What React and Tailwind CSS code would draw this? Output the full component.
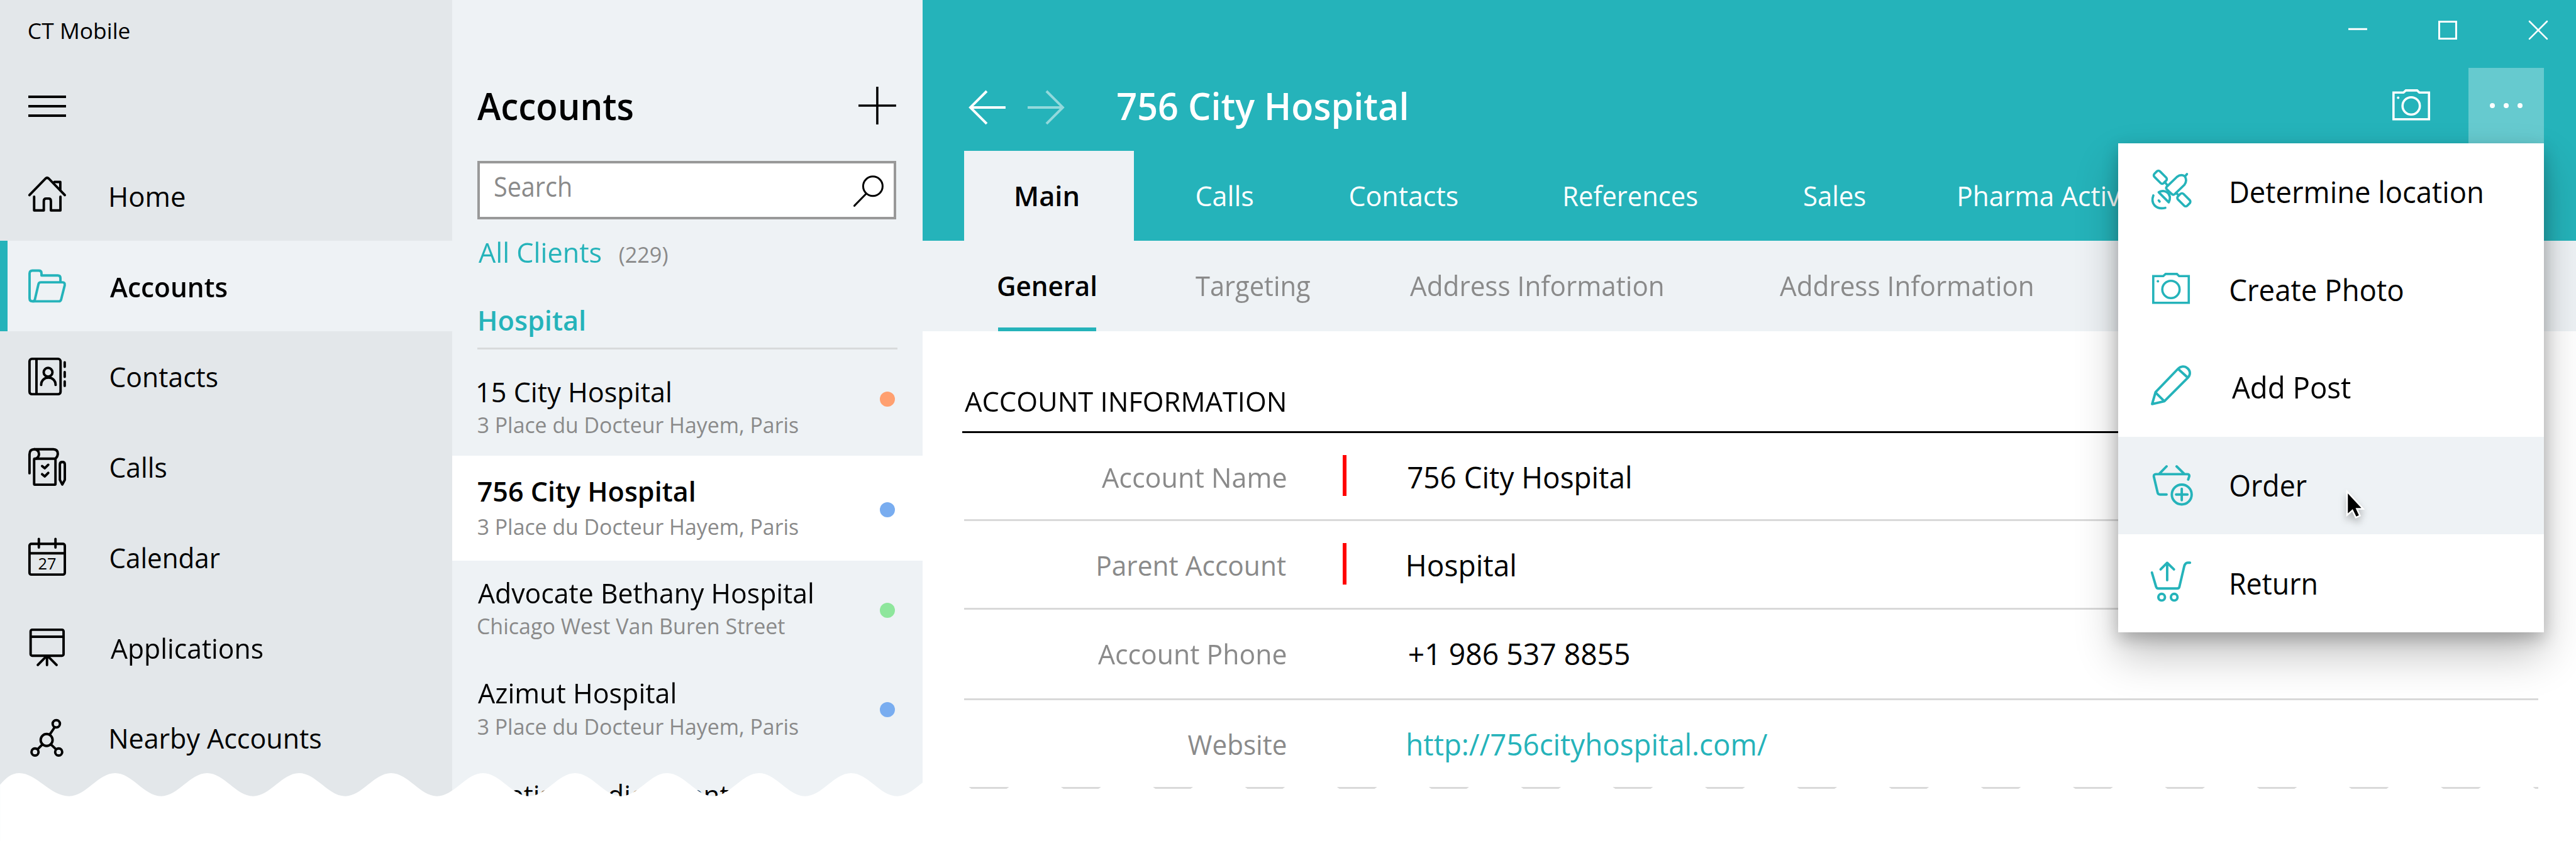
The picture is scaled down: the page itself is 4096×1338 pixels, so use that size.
import { useLayoutEffect, useRef } from "react";

// Single-line text whose ink starts at the box's left edge and spans `w` pixels.
function Label({ w, className = "", children }) {
  const ref = useRef(null);
  useLayoutEffect(() => {
    const el = ref.current;
    const cs = getComputedStyle(el);
    const ctx = document.createElement("canvas").getContext("2d");
    ctx.font = `${cs.fontWeight} 100px ${cs.fontFamily}`;
    const size = parseFloat(cs.fontSize) / 100;
    const m = ctx.measureText(el.textContent);
    const left = m.actualBoundingBoxLeft * size;
    const ink = left + m.actualBoundingBoxRight * size;
    el.style.transform = `scaleX(${w / ink}) translateX(${left}px)`;
  }, [w]);
  return (
    <div className={`shrink-0 leading-none whitespace-nowrap ${className}`} style={{ width: w }}>
      <span ref={ref} className="inline-block origin-left align-top leading-none">
        {children}
      </span>
    </div>
  );
}

function Icon({ w = 60, h = 60, sw = 3.9, className = "", children }) {
  return (
    <svg
      width={w}
      height={h}
      viewBox={`0 0 ${w} ${h}`}
      fill="none"
      stroke="currentColor"
      strokeWidth={sw}
      strokeLinecap="round"
      strokeLinejoin="round"
      className={`block shrink-0 overflow-visible ${className}`}
    >
      {children}
    </svg>
  );
}

const HomeIcon = () => (
  <Icon>
    <path d="M1.8 29.5 27.5 3Q30 .8 32.5 3L58.2 29.5" />
    <path d="M41.5 8.5H51V20.5" />
    <path d="M9.3 32V53.8H24.7V39Q24.7 35 28.5 35H32.500Q36 35 36 39V53.8H51.2V32" />
  </Icon>
);

const FolderIcon = () => (
  <Icon>
    <path d="M9 54.5H7Q2 54.5 2 49.5V10Q2 5.5 6.5 5.5H16.5Q21 5.5 21 9.5V13.3H47Q51.2 13.3 51.2 17.5V24" />
    <path d="M9 54.5H48.5Q51.5 54.5 52.3 51.5L58 29Q58.8 24.2 54.5 24.2H20Q17 24.2 16.2 27L10.5 51.5Q9.8 54.5 7 54.5" />
  </Icon>
);

const ContactsIcon = () => (
  <Icon>
    <rect x="1.9" y="1.9" width="49.5" height="56.4" rx="4" />
    <path d="M13 2V58M58 7.5V14.5M58 23V30.5M58 38V45" />
    <circle cx="31.5" cy="23.3" r="7" />
    <path d="M20.5 43.5C20.5 28 43.5 28 43.5 43.5" />
  </Icon>
);

const CallsIcon = () => (
  <Icon>
    <path d="M1.9 40V10Q2 1.8 9.5 1.8H40Q47 2 47 9Q47 13 43.5 16.5" />
    <path d="M9.5 1.8Q17 2.5 17 9.5Q17 14 12.5 16.5" />
    <rect x="9.3" y="16.8" width="34" height="41.4" rx="1" />
    <path d="M22 28.5 26.3 32 31.8 26.5M22 41.5 26.3 45 31.8 39.5" />
    <path d="M50.3 50.5V26Q50.3 22 54.2 22Q58.2 22 58.2 26V50.5L54.2 58Z" />
  </Icon>
);

const CalendarIcon = () => (
  <Icon>
    <rect x="1.9" y="9.3" width="56.3" height="49" rx="3" />
    <path d="M2 24.3H58M16.8 1.5V15M43.3 1.5V15" />
    <text x="30" y="50.6" textAnchor="middle" fontSize="25.5" fontWeight="500" fill="currentColor" stroke="none">
      27
    </text>
  </Icon>
);

const ApplicationsIcon = () => (
  <Icon>
    <rect x="3.7" y="1.9" width="52.5" height="41.4" rx="2.5" />
    <path d="M4 13H56M29.8 44V58.2M28.5 44.5 15.2 58M31.5 44.5 45 58" />
  </Icon>
);

const NearbyIcon = () => (
  <Icon>
    <circle cx="29.2" cy="33.3" r="9.5" />
    <circle cx="44.6" cy="7.6" r="5.8" />
    <circle cx="10.7" cy="52.5" r="5.6" />
    <circle cx="48.4" cy="52.5" r="5.6" />
    <path d="M42 13 34 25M22.500 40.5 15 48M36 40.5 44 48" />
  </Icon>
);

const CameraIcon = ({ className }) => (
  <Icon h={50} sw={3.6} className={className}>
    <path d="M1.8 5.300H17.700L21.5 1.9H39.5L43 5.3H58.4V47.8H1.8Z" strokeLinejoin="miter" />
    <circle cx="30" cy="26.5" r="13.8" />
    <circle cx="9.2" cy="13.5" r="2" fill="currentColor" stroke="none" />
  </Icon>
);

const SatelliteIcon = () => (
  <Icon w={64} h={64} sw={3.7}>
    <rect x="4.5" y="5.7" width="21" height="12.5" rx="3.5" transform="rotate(45 15 12)" />
    <rect x="42" y="41.7" width="21" height="12.5" rx="3.5" transform="rotate(45 52.5 48)" />
    <path d="M25 27.5 41.5 11.5Q48 6.5 54 10.5Q58.5 17 53.5 24L38 39Q35.5 41 33 38.5L25.5 31.5Q23.5 29.5 25 27.5Z" />
    <path d="M54.5 10.5 57.5 7M22 19.5 26 24.5M40 37 44 40.5" />
    <path d="M12.5 36 28.5 52Q33 42.5 26.5 36.5Q20 31.5 12.5 36Z" />
    <path d="M12.5 49 14 50.8M4 41C-1 54 8 64 23 60.800" />
  </Icon>
);

const PencilIcon = () => (
  <Icon w={64} h={64}>
    <path d="M43 6 7.5 43 2 62 21.5 57.5 59 20C63 15.5 63.5 9.5 58.5 5C54 .8 47.5 1.2 43 6ZM43.5 6 59 20M7.8 44 21 57" />
  </Icon>
);

const BasketIcon = () => (
  <Icon w={64} h={64}>
    <path d="M22 2 10.6 13.7M38 2 50 13.7M56.5 23 58.3 17.5Q58.3 14.4 55 14.4H5Q1.2 14.4 1.8 18.5L7.8 44Q8.5 46.8 11.5 46.8H22" />
    <circle cx="46.2" cy="46.8" r="15.8" />
    <path d="M37.2 46.8H55.300M46.2 37.800V55.8" />
  </Icon>
);

const ReturnIcon = () => (
  <Icon w={64} h={64}>
    <path d="M1.7 18 8.3 40.5Q9.3 43.4 12 43.4H42Q44.7 43.4 45.5 40.5L53 8.5Q54.5 2.3 59 2.3H62.3" />
    <path d="M26 2.5V30M15.5 13 26 2.5 36.8 13" />
    <circle cx="17.2" cy="57.2" r="5.3" />
    <circle cx="37.2" cy="57.2" r="5.3" />
  </Icon>
);

const NAV = [
  { label: "Home", icon: HomeIcon, w: 117.5 },
  { label: "Accounts", icon: FolderIcon, w: 186, active: true },
  { label: "Contacts", icon: ContactsIcon, w: 170 },
  { label: "Calls", icon: CallsIcon, w: 88.5 },
  { label: "Calendar", icon: CalendarIcon, w: 174 },
  { label: "Applications", icon: ApplicationsIcon, w: 242 },
  { label: "Nearby Accounts", icon: NearbyIcon, w: 335 },
];

function Sidebar() {
  return (
    <aside className="flex w-[720px] shrink-0 flex-col bg-[#e3e7ea]">
      <div className="h-[152.5px] shrink-0 pt-8 pl-[46px]">
        <Label w={160} className="text-[35px]">CT Mobile</Label>
      </div>
      <div className="ml-[45px] flex h-[87.5px] w-[60px] shrink-0 flex-col gap-[11px]">
        <div className="h-1 bg-black" />
        <div className="h-1 bg-black" />
        <div className="h-1 bg-black" />
      </div>
      {NAV.map(({ label, icon: Glyph, w, active }) => (
        <div
          key={label}
          className={`flex h-36 shrink-0 items-center border-l-[12.5px] pl-[33px] ${
            active ? "border-[#25b3ba] bg-[#eef2f5] font-semibold" : "border-transparent"
          }`}
        >
          <span className={active ? "text-[#25b3ba]" : ""}>
            <Glyph />
          </span>
          <Label w={w} className={`pt-[3px] text-[44px] ${active ? "ml-[70px]" : "ml-[71px]"}`}>{label}</Label>
        </div>
      ))}
    </aside>
  );
}

const ACCOUNTS = [
  { name: "15 City Hospital", nw: 306, sub: "3 Place du Docteur Hayem, Paris", sw: 510, row: "h-[169px] pt-[46px]", gap: "mt-[13.5px]", dot: "mt-[21.5px] bg-[#ffa070]" },
  { name: "756 City Hospital", nw: 344, sub: "3 Place du Docteur Hayem, Paris", sw: 510, row: "h-[168px] pt-[36px] bg-white font-semibold", gap: "mt-[17px]", dot: "mt-[38.5px] bg-[#79adf0]" },
  { name: "Advocate Bethany Hospital", nw: 532.5, sub: "Chicago West Van Buren Street", sw: 489, row: "h-[160px] pt-[30px]", gap: "mt-[13px]", dot: "mt-[37px] bg-[#8ee69c]" },
  { name: "Azimut Hospital", nw: 313.5, sub: "3 Place du Docteur Hayem, Paris", sw: 510, row: "h-[160px] pt-[29.5px]", gap: "mt-[14px]", dot: "mt-[35.5px] bg-[#79adf0]" },
  { name: "Baptist Medical Center", nw: 441, row: "h-[127px] pt-[31px]" },
];

function AccountList() {
  return (
    <section className="flex w-[750px] shrink-0 flex-col bg-[#eef2f5]">
      <div className="flex h-[256px] shrink-0 items-start justify-between pr-[42px] pl-10">
        <Label w={247.5} className="mt-[139.5px] text-[59px] font-semibold">Accounts</Label>
        <Icon sw={3.6} className="mt-[138px]">
          <path d="M30 0V60M0 30H60" strokeLinecap="butt" />
        </Icon>
      </div>
      <div className="mx-10 flex h-[94px] w-[668px] shrink-0 justify-between border-[4.5px] border-[#999] bg-white pr-[16px] pl-[25px]">
        <Label w={120.5} className="mt-[17px] text-[43px] text-[#8a8a8a]">Search</Label>
        <Icon w={50} h={50} sw={3} className="mt-[20px]">
          <circle cx="33" cy="17.3" r="15.5" />
          <path d="M22.5 29 3.5 48.5" />
        </Icon>
      </div>
      <div className="flex h-[139px] shrink-0 pt-[31px] pl-[42px]">
        <Label w={195} className="text-[44px] text-[#25b3ba]">All Clients</Label>
        <Label w={76.5} className="mt-[8px] ml-[30px] text-[35px] text-[#8a8a8a]">(229)</Label>
      </div>
      <div className="mr-10 ml-10 flex h-[68px] w-[670px] shrink-0 border-b-[3.5px] border-[#d8dadb] pl-1">
        <Label w={166} className="text-[44px] font-semibold text-[#25b3ba]">Hospital</Label>
      </div>
      {ACCOUNTS.map((a) => (
        <div key={a.name} className={`flex shrink-0 justify-between pr-11 pl-[41px] ${a.row}`}>
          <div>
            <Label w={a.nw} className="pl-px text-[44px]">{a.name}</Label>
            {a.sub && (
              <Label w={a.sw} className={`text-[35px] font-normal text-[#8a8a8a] ${a.gap}`}>{a.sub}</Label>
            )}
          </div>
          {a.dot && <div className={`size-6 rounded-full ${a.dot}`} />}
        </div>
      ))}
    </section>
  );
}

function Header() {
  return (
    <header className="flex h-96 shrink-0 flex-col bg-[#25b3ba] text-white">
      <div className="flex h-[108px] shrink-0 justify-end gap-[114px] pt-[33px] pr-[45px]">
        <Icon w={30} h={30} sw={3}><path d="M0 13.3H30" strokeLinecap="butt" /></Icon>
        <Icon w={30} h={30} sw={3}><path d="M1.5 1.5H28.5V28.5H1.5Z" strokeLinejoin="miter" /></Icon>
        <Icon w={30} h={30} sw={2.6}><path d="M1 1 29 29M29 1 1 29" /></Icon>
      </div>
      <div className="flex h-[132px] shrink-0">
        <Icon w={60} h={56} sw={4} className="mt-[35px] ml-[73px]">
          <path d="M59 28H3M29 2 3 28 29 54" strokeLinecap="butt" strokeLinejoin="miter" />
        </Icon>
        <Icon w={60} h={56} sw={4} className="mt-[35px] ml-[33px] opacity-50">
          <path d="M1 28H57M31 2 57 28 31 54" strokeLinecap="butt" strokeLinejoin="miter" />
        </Icon>
        <Label w={460} className="mt-[31.5px] ml-[85px] text-[59px] font-semibold">756 City Hospital</Label>
        <CameraIcon className="mt-[34px] ml-auto" />
        <div className="mr-[51px] ml-[62px] flex h-30 w-30 items-center justify-center gap-[14px] bg-white/30">
          <i className="size-2 rounded-full bg-white" />
          <i className="size-2 rounded-full bg-white" />
          <i className="size-2 rounded-full bg-white" />
        </div>
      </div>
      <nav className="flex h-36 shrink-0 pl-[66.5px] text-[44px]">
        <div className="flex h-36 w-[270px] justify-center bg-[#eef2f5] pt-[50.5px] pr-1.5 font-semibold text-black">
          <Label w={98}>Main</Label>
        </div>
        <div className="flex pt-[50.5px]">
          <Label w={89.5} className="ml-[100px]">Calls</Label>
          <Label w={171} className="ml-[155px]">Contacts</Label>
          <Label w={211} className="ml-[171px]">References</Label>
          <Label w={97} className="ml-[170.5px]">Sales</Label>
          <Label w={336} className="ml-[150px]">Pharma Activities</Label>
        </div>
      </nav>
    </header>
  );
}

const FIELDS = [
  { label: "Account Name", lw: 293, value: "756 City Hospital", vw: 353.5, required: true, row: "h-[141px]" },
  { label: "Parent Account", lw: 299, value: "Hospital", vw: 169.5, required: true, row: "h-[141px]" },
  { label: "Account Phone", lw: 299, value: "+1 986 537 8855", vw: 350, row: "h-[144px]", nudge: "pl-0.5" },
  { label: "Website", lw: 155.5, value: "http://756cityhospital.com/", vw: 572.5, link: true, row: "h-[141px]" },
];

function Detail() {
  return (
    <main className="flex min-w-0 flex-1 flex-col bg-white">
      <Header />
      <div className="flex h-36 shrink-0 bg-[#eef2f5] pl-[120px] text-[44px] text-[#8a8a8a]">
        <div className="flex h-36 w-[156px] flex-col items-center border-b-[6.5px] border-[#25b3ba] pt-[49.5px] font-semibold text-black">
          <Label w={155}>General</Label>
        </div>
        <div className="flex pt-[49.5px]">
          <Label w={182.5} className="ml-[158.5px]">Targeting</Label>
          <Label w={402.5} className="ml-[159.5px]">Address Information</Label>
          <Label w={402.5} className="ml-[187px]">Address Information</Label>
        </div>
      </div>
      <div className="mr-[60px] ml-[63px] h-[162px] shrink-0 border-b-[3.5px] border-black pt-[90px] pl-1">
        <Label w={509.5} className="text-[44px]">ACCOUNT INFORMATION</Label>
      </div>
      {FIELDS.map((f) => (
        <div key={f.label} className={`mr-[60px] ml-[66px] flex shrink-0 border-b-[3.5px] border-[#d9d9d9] ${f.row}`}>
          <div className="flex w-[512px] justify-end pt-[49px]">
            <Label w={f.lw} className="text-[44px] text-[#8a8a8a]">{f.label}</Label>
          </div>
          <div className={`mt-[35px] ml-[91px] h-[66px] w-[6px] ${f.required ? "bg-[#f00]" : ""}`} />
          <div className={`ml-[98px] ${f.nudge ?? ""}`}>
            <Label w={f.vw} className={`mt-[47px] text-[47px] ${f.link ? "text-[#25b3ba]" : ""}`}>
              {f.value}
            </Label>
          </div>
        </div>
      ))}
    </main>
  );
}

const ACTIONS = [
  { label: "Determine location", icon: SatelliteIcon, w: 399.5, at: "ml-13 mt-[-6px]", indent: "pl-px" },
  { label: "Create Photo", icon: CameraIcon, w: 274, at: "ml-[54px] mt-[-4px]" },
  { label: "Add Post", icon: PencilIcon, w: 189, at: "ml-13 mt-[-7px]", indent: "pl-0.5" },
  { label: "Order", icon: BasketIcon, w: 121, at: "ml-[55px] mt-[-1px]", hover: true },
  { label: "Return", icon: ReturnIcon, w: 135, at: "ml-13 mt-[-6px]", indent: "pl-px" },
];

function ActionMenu() {
  return (
    <div className="absolute top-[228px] left-[3375px] w-[678px] bg-white shadow-[0_10px_24px_rgba(0,0,0,0.22),0_36px_64px_rgba(0,0,0,0.24)]">
      {ACTIONS.map(({ label, icon: Glyph, w, at, indent = "", hover }) => (
        <div key={label} className={`flex h-[156px] items-center ${hover ? "bg-[#eef2f5]" : ""}`}>
          <div className="w-[179px] text-[#25b3ba]">
            <div className={at}>
              <Glyph />
            </div>
          </div>
          <div className={indent}>
            <Label w={w} className="text-[47px]">{label}</Label>
          </div>
        </div>
      ))}
      <svg
        width="40"
        height="52"
        viewBox="0 0 40 52"
        className="absolute top-[554px] left-[362px] overflow-visible drop-shadow-[0_8px_6px_rgba(0,0,0,0.25)]"
      >
        <path d="M2 2V39.5L10.5 32 16 43.5 22.5 40.5 17.5 29.5H27.5Z" fill="#000" stroke="#fff" strokeWidth="2.5" />
      </svg>
    </div>
  );
}

// Torn bottom edge: a repeating wave, one trough and one crest per period.
function wavePath() {
  const half = 73.285;
  const bend = half * 0.37;
  let d = "M0 18.5C9 8 18 0 30.7 0C58 0 80 36.7 110 36.7";
  let x = 110;
  for (let i = 0; x < 4200; i++) {
    const y = i % 2 ? 36.7 : 0;
    const from = i % 2 ? 0 : 36.7;
    d += `C${x + bend} ${from} ${x + half - bend} ${y} ${x + half} ${y}`;
    x += half;
  }
  return `${d}V120H0Z`;
}

export default function App() {
  return (
    <div className="h-[1338px] w-[4096px] overflow-hidden bg-white">
      <div className="relative flex h-[1341px] w-[4104px] overflow-hidden font-['Open_Sans',sans-serif] text-black [zoom:0.99805]">
        <Sidebar />
        <AccountList />
        <Detail />
        <svg width="4104" height="109" viewBox="0 0 4104 109" className="absolute top-[1232.5px] left-0">
          <path d={wavePath()} fill="#fff" />
        </svg>
        <ActionMenu />
      </div>
    </div>
  );
}
